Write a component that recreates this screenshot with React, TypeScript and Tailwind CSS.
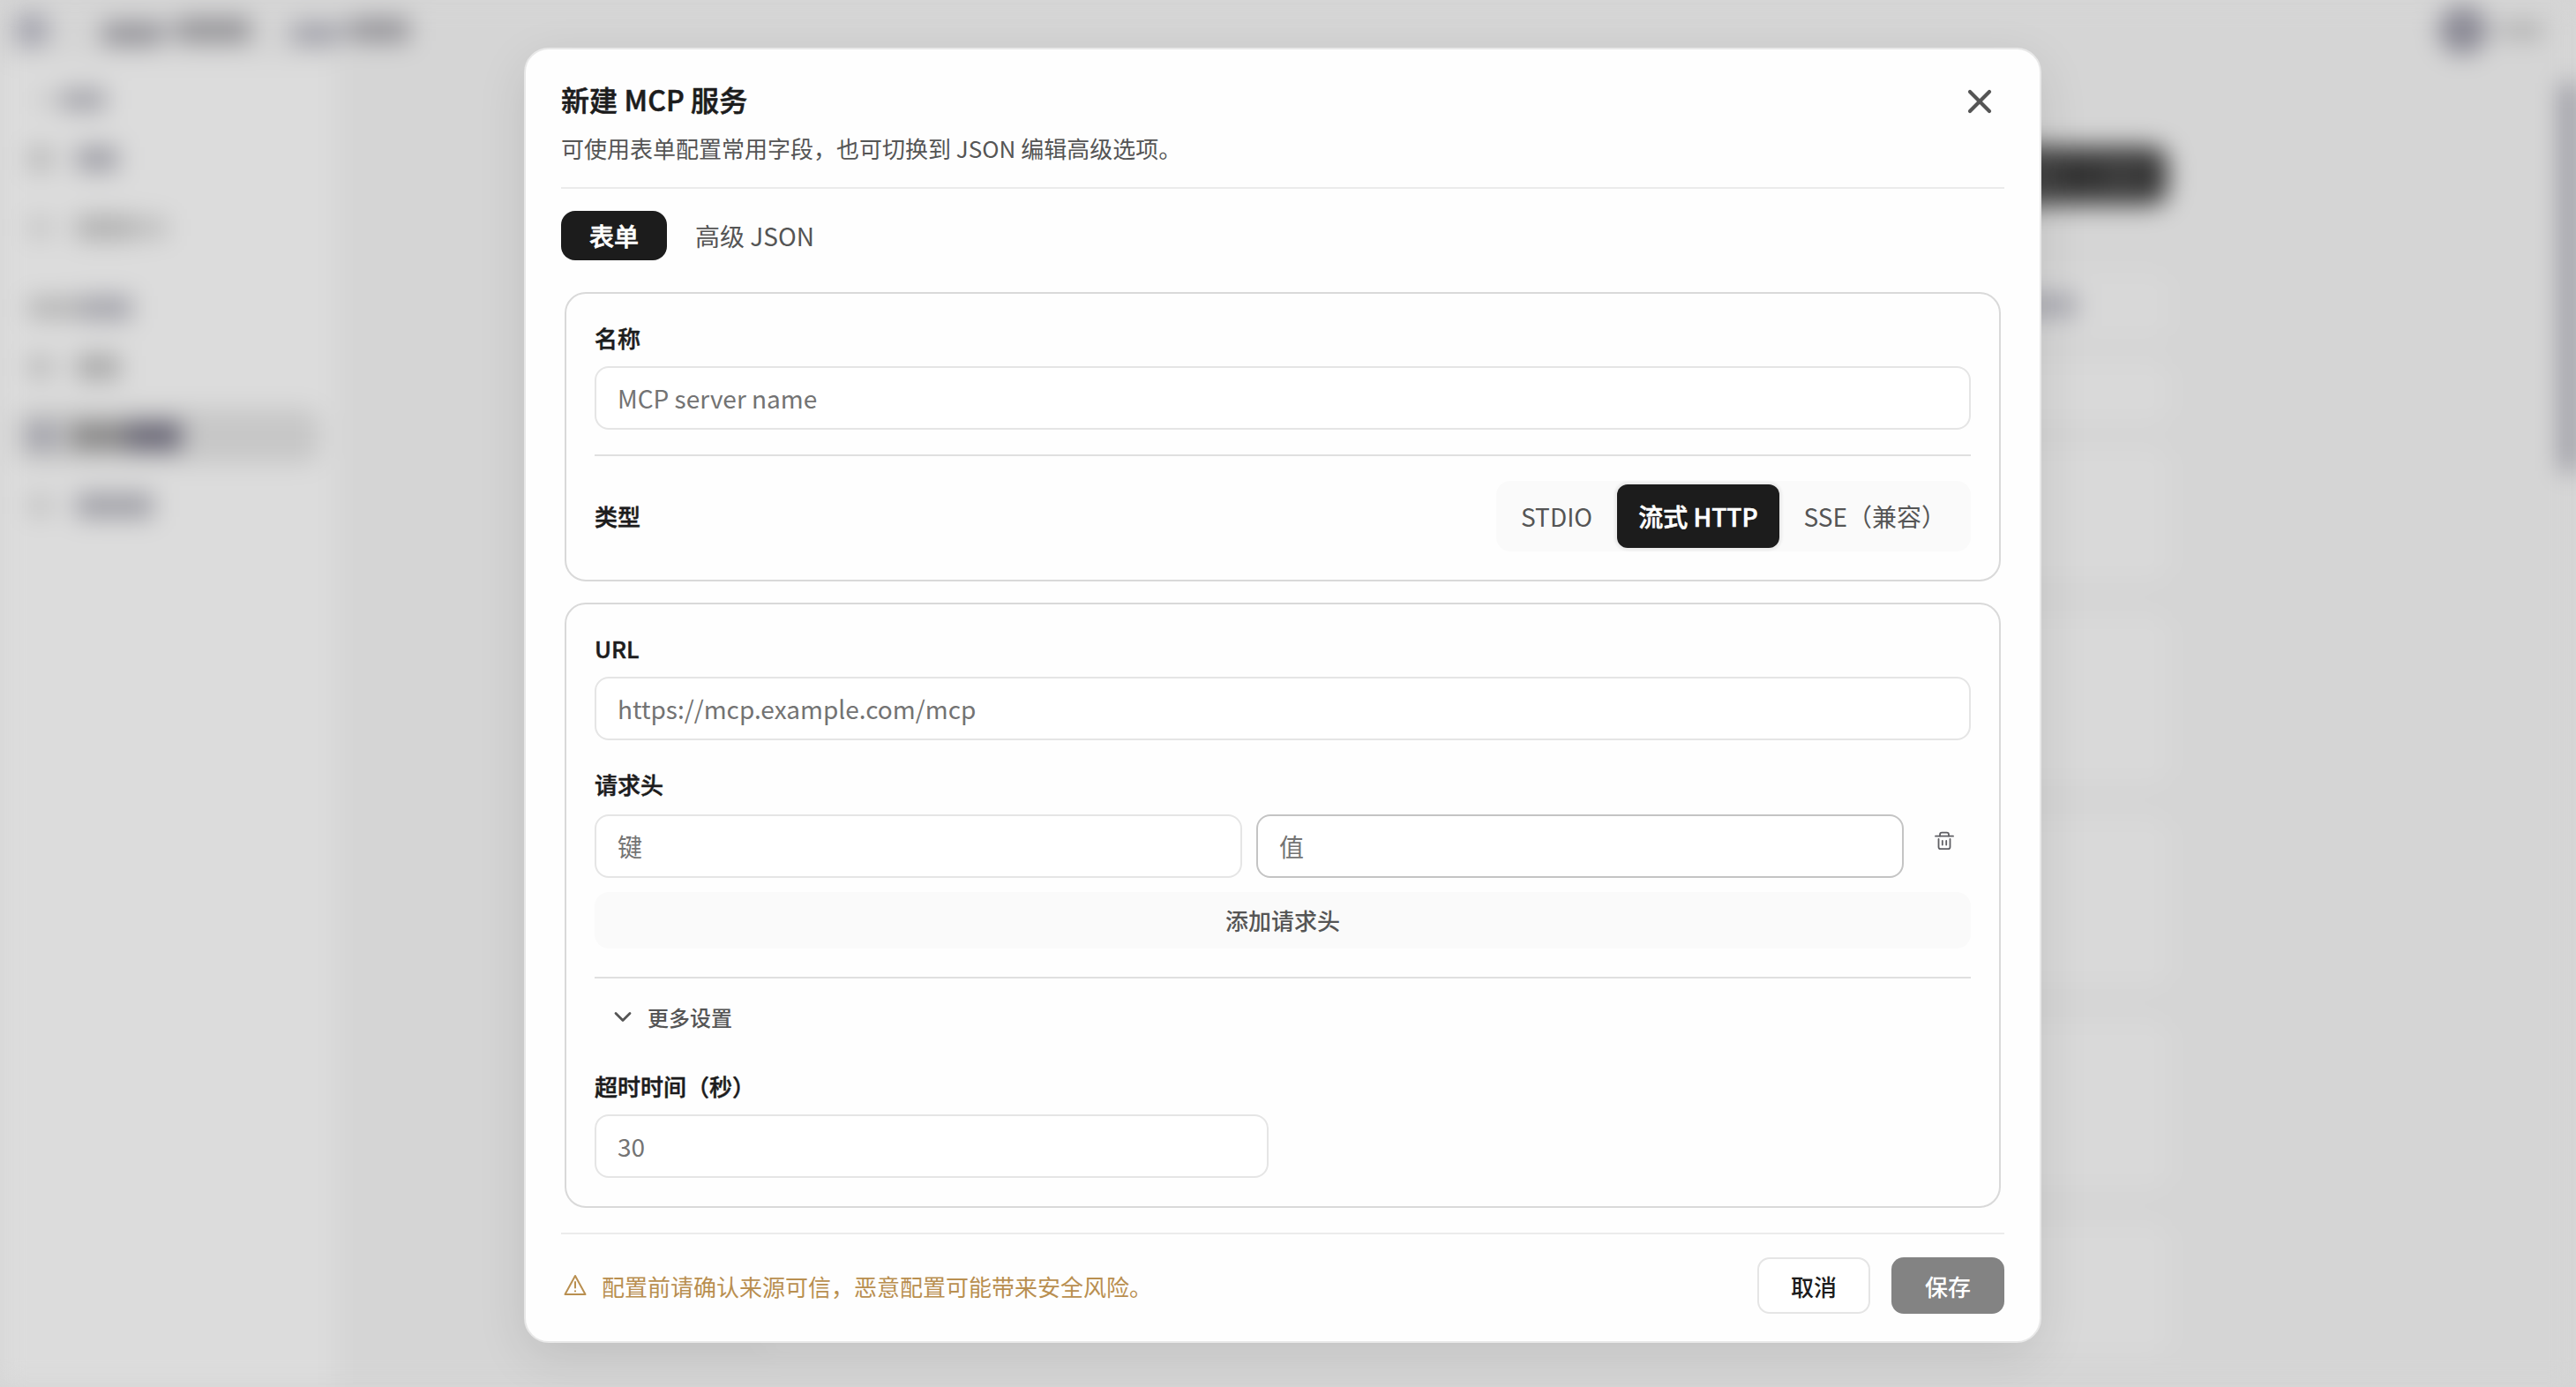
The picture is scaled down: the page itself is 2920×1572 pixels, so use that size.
import { useState } from 'react';
import { X } from 'lucide-react';

const inputClass =
  'h-[72px] min-w-0 rounded-[16px] border-2 border-[#e5e5e5] bg-white px-6 text-[28px] text-[#1c1c1c] placeholder:text-[#737373] placeholder:opacity-100 outline-none';

const labelClass = 'text-[26px] leading-[36px] font-medium text-[#1c1c1c] [-webkit-text-stroke:0.5px_currentColor]';

function TrashIcon() {
  return (
    <svg width="24" height="24" viewBox="0 0 24 24" fill="none" stroke="#5f5f64" strokeWidth="1.8" strokeLinecap="round" strokeLinejoin="round">
      <path d="M2 6.7h20" />
      <path d="M7 6.500V5C7 3.500 8 2.700 9.300 2.700h5.400C16 2.700 17 3.500 17 5v1.500" />
      <path d="M5.500 10v9c0 1.300.8 2.200 2.200 2.200h8.600c1.400 0 2.200-.9 2.200-2.200v-9" />
      <path d="M9.800 12v4.500M14.200 12v4.500" />
    </svg>
  );
}

function WarningIcon() {
  return (
    <svg width="28" height="28" viewBox="0 0 28 28" fill="none" stroke="#b98f50" strokeWidth="2" strokeLinejoin="round" strokeLinecap="round">
      <path d="M14 3 L25.500 24 H2.500 Z" />
      <path d="M14 10v6.500M14 20.300v.2" />
    </svg>
  );
}

// Page that sits behind the dialog
function Backdrop() {
  return (
    <div className="flex h-full w-full flex-col bg-[#d5d5d5] blur-[14px]">
      <div className="flex h-[68px] shrink-0 items-center justify-between pl-[16px] pr-[38px]">
        <div className="flex items-center">
          <div className="h-10 w-10 rounded-full bg-[#a4a4ae]" />
          <div className="ml-[60px] mt-2 h-[26px] w-[66px] bg-[#939298]" />
          <div className="h-[16px] w-[20px] bg-[#b0b0b4]" />
          <div className="h-[28px] w-[82px] bg-[#949397]" />
          <div className="ml-[46px] mt-2 h-[24px] w-[54px] bg-[#a0a0a9]" />
          <div className="h-[16px] w-[14px] bg-[#b0b0b4]" />
          <div className="h-[28px] w-[66px] bg-[#96959a]" />
        </div>
        <div className="flex items-center gap-[14px]">
          <div className="h-[56px] w-[56px] rounded-full bg-[#8c8b96]" />
          <div className="h-[20px] w-[48px] bg-[#b0b0b0]" />
        </div>
      </div>
      <div className="flex min-h-0 flex-1">
        <div className="flex w-[380px] shrink-0 flex-col bg-[#dcdcdc] px-[18px]">
          <div className="mt-[33px] flex h-6 items-center pl-5">
            <div className="h-4 w-8 bg-[#cbcbcb]" />
            <div className="h-6 w-[50px] bg-[#a2a2a9]" />
          </div>
          <div className="mt-[41px] flex h-7 items-center gap-[26px] pl-[14px]">
            <div className="h-7 w-7 bg-[#b9b9b9]" />
            <div className="h-7 w-[48px] bg-[#a0a0a7]" />
          </div>
          <div className="mt-[52px] flex h-6 items-center gap-[26px] pl-[14px]">
            <div className="h-6 w-7 bg-[#c5c5c5]" />
            <div className="flex items-center">
              <div className="h-7 w-[64px] bg-[#b0b0b0]" />
              <div className="h-6 w-[40px] bg-[#bebebe]" />
            </div>
          </div>
          <div className="mt-[67px] flex h-6 items-center pl-[14px]">
            <div className="h-6 w-[60px] bg-[#b4b4b4]" />
            <div className="h-7 w-[58px] bg-[#a5a5ac]" />
          </div>
          <div className="mt-[41px] flex h-7 items-center gap-[26px] pl-[14px]">
            <div className="h-6 w-7 bg-[#b8b8b8]" />
            <div className="h-7 w-[50px] bg-[#a8a8a8]" />
          </div>
          <div className="mt-[33px] flex h-[62px] items-center rounded-[16px] bg-[#c7c7c7] pl-[14px]">
            <div className="h-7 w-8 bg-[#9c9ca6]" />
            <div className="ml-[16px] h-7 w-[64px] bg-[#838282]" />
            <div className="h-8 w-[62px] bg-[#686675]" />
          </div>
          <div className="mt-[34px] flex h-7 items-center gap-[26px] pl-[14px]">
            <div className="h-6 w-7 bg-[#c2c2c2]" />
            <div className="h-7 w-[88px] bg-[#9f9fa6]" />
          </div>
        </div>
        <div className="flex min-w-0 flex-1 flex-col pl-[484px] pr-[446px]">
          <div className="ml-auto mt-[97px] flex h-[68px] w-[320px] shrink-0 items-center justify-end gap-5 rounded-[20px] bg-[#434343] pr-4">
            <div className="h-[24px] w-[60px] bg-[#2d2d2d]" />
            <div className="h-[24px] w-[30px] bg-[#303030]" />
          </div>
          <div className="mt-[76px] flex h-[74px] shrink-0 items-center rounded-[20px] bg-[#d8d8d8]">
            <div className="ml-auto mr-[104px] h-[26px] w-[120px] bg-[#a7a7af]" />
          </div>
          <div className="mt-[26px] h-[70px] shrink-0 rounded-[20px] bg-[#d9d9d9]" />
          <div className="mt-[28px] h-[150px] shrink-0 rounded-[20px] bg-[#d9d9d9]" />
          <div className="mt-[40px] h-[190px] shrink-0 rounded-[20px] bg-[#d9d9d9]" />
          <div className="mt-[40px] h-[190px] shrink-0 rounded-[20px] bg-[#d9d9d9]" />
          <div className="mt-[40px] h-[190px] shrink-0 rounded-[20px] bg-[#d9d9d9]" />
          <div className="mt-[40px] h-[150px] shrink-0 rounded-[20px] bg-[#d9d9d9]" />
        </div>
        <div className="mt-[26px] h-[440px] w-[16px] shrink-0 bg-[#82828e]" />
      </div>
    </div>
  );
}

function TypeSwitch() {
  const [type, setType] = useState('流式 HTTP');
  return (
    <div className="flex h-20 gap-1 rounded-[16px] bg-[#fafafa] p-1">
      {['STDIO', '流式 HTTP', 'SSE（兼容）'].map((item) => (
        <button
          key={item}
          onClick={() => setType(item)}
          className={
            item === type
              ? 'h-[72px] rounded-[12px] bg-[#1c1c1c] px-[24px] text-[28px] font-medium text-white shadow-[0_0_3px_3px_rgba(0,0,0,0.06)] [-webkit-text-stroke:0.6px_currentColor]'
              : 'h-[72px] px-[24px] text-[28px] text-[#555555]'
          }
        >
          {item}
        </button>
      ))}
    </div>
  );
}

export default function App() {
  return (
    <div className="relative h-[1572px] w-[2920px] overflow-hidden bg-[#d5d5d5] font-['Noto_Sans_CJK_SC',sans-serif]">
      <Backdrop />
      <div className="absolute inset-0 pl-[594px] pt-[54px]">
        <div className="flex h-[1468px] w-[1720px] flex-col rounded-[28px] border-2 border-[#e8e8e8] bg-[#fefefe] px-10 pb-[31px] pt-9 shadow-[0_16px_56px_rgba(0,0,0,0.1)]">
          {/* Header */}
          <div className="flex h-[122px] shrink-0 items-start justify-between border-b-2 border-[#ebebeb]">
            <div>
              <h2 className="text-[32px] leading-[40px] font-medium tracking-[0.1px] text-[#1c1c1c] [-webkit-text-stroke:0.6px_currentColor]">
                新建 MCP 服务
              </h2>
              <p className="mt-[18px] text-[26px] leading-[36px] text-[#555555]">
                可使用表单配置常用字段，也可切换到 JSON 编辑高级选项。
              </p>
            </div>
            <button className="mr-[6px] mt-[1px]">
              <X size={44} strokeWidth={2.3} color="#555555" />
            </button>
          </div>

          {/* Tabs */}
          <div className="mt-[25px] flex h-14 shrink-0">
            <button className="w-[120px] rounded-[16px] bg-[#1c1c1c] text-[28px] font-medium text-white [-webkit-text-stroke:0.6px_currentColor]">
              表单
            </button>
            <button className="px-8 text-[28px] text-[#555555]">高级 JSON</button>
          </div>

          {/* Form */}
          <div className="mt-9 flex flex-col gap-6 px-1">
            <div className="flex flex-col rounded-[24px] border-2 border-[#d9d9d9] p-8">
              <label className={labelClass}>名称</label>
              <input className={`${inputClass} mt-[14px]`} placeholder="MCP server name" />
              <div className="mt-7 h-[2px] bg-[#e0e0e0]" />
              <div className="mt-7 flex items-center justify-between">
                <span className={labelClass}>类型</span>
                <TypeSwitch />
              </div>
            </div>

            <div className="flex flex-col rounded-[24px] border-2 border-[#d9d9d9] p-8">
              <label className={labelClass}>URL</label>
              <input className={`${inputClass} mt-[14px]`} placeholder="https://mcp.example.com/mcp" />

              <label className={`${labelClass} mt-8`}>请求头</label>
              <div className="mt-4 flex items-start gap-4">
                <input className={`${inputClass} flex-1`} placeholder="键" />
                <input className={`${inputClass} flex-1 border-[#c4c4c4]!`} placeholder="值" />
                <button className="flex h-[60px] w-[60px] items-center justify-center">
                  <TrashIcon />
                </button>
              </div>
              <button className="mt-4 h-16 rounded-[16px] bg-[#fafafa] pb-[2px] text-[26px] font-medium text-[#555555]">
                添加请求头
              </button>

              <div className="mt-8 h-[2px] bg-[#e0e0e0]" />
              <button className="mt-5 flex h-12 items-center gap-4 pl-[20px] text-[24px] font-medium text-[#555555]">
                <svg width="24" height="24" viewBox="0 0 24 24" fill="none" stroke="#555555" strokeWidth="2.8" strokeLinecap="round" strokeLinejoin="round">
                  <path d="M4 7.500 L12 15.500 L20 7.500" />
                </svg>
                更多设置
              </button>
              <label className={`${labelClass} mt-9`}>超时时间（秒）</label>
              <input className={`${inputClass} mt-[14px] w-[764px]`} placeholder="30" />
            </div>
          </div>

          {/* Footer */}
          <div className="mt-7 flex h-[92px] shrink-0 items-end justify-between border-t-2 border-[#ebebeb]">
            <div className="flex h-16 items-center gap-[16px] pl-[2px]">
              <WarningIcon />
              <span className="pt-[2px] text-[26px] leading-[36px] text-[#b98f50]">
                配置前请确认来源可信，恶意配置可能带来安全风险。
              </span>
            </div>
            <div className="flex gap-6">
              <button className="h-16 w-32 rounded-[14px] border-2 border-[#e5e5e5] bg-white text-[26px] font-medium text-[#1c1c1c]">
                取消
              </button>
              <button className="h-16 w-32 rounded-[14px] bg-[#838383] text-[26px] font-medium text-white">保存</button>
            </div>
          </div>
        </div>
      </div>
    </div>
  );
}
